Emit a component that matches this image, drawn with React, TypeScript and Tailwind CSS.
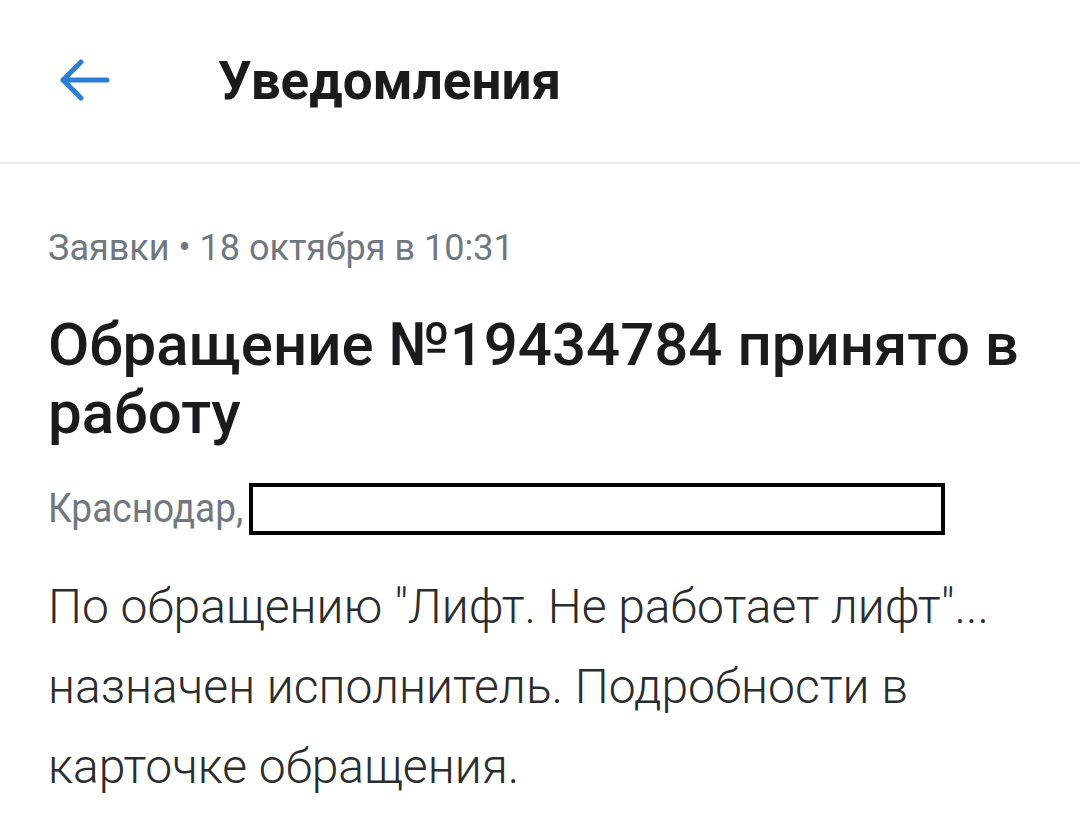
export default function App() {
  return (
    <div className="min-h-screen w-[1080px] bg-white font-['Roboto',sans-serif]">
      <header className="flex h-[164px] items-center border-b-2 border-[#ececec]">
        <div className="flex w-[218px] items-center pl-[58px]">
          <svg width="54" height="44" viewBox="0 0 54 44" fill="none">
            <path
              d="M49 21H5M23 3L5 21l18 18"
              stroke="#2a7fd4"
              strokeWidth="5"
              strokeLinecap="round"
              strokeLinejoin="round"
            />
          </svg>
        </div>
        <h1 className="text-[53px] font-bold leading-none text-[#1a1b1d]">Уведомления</h1>
      </header>

      <main className="px-[48px] pt-[60px]">
        <div className="text-[36px] leading-[48px] text-[#6f7881]">Заявки • 18 октября в 10:31</div>

        <h2 className="mt-[39px] text-[60px] font-medium leading-[68px] text-[#1a1b1d]">
          Обращение №19434784 принято в работу
        </h2>

        <div className="mt-[36px] flex items-center">
          <span className="inline-block scale-y-110 text-[37px] leading-[52px] text-[#6f7881]">Краснодар,</span>
          <div className="ml-[6px] h-[52px] w-[696px] border-[4px] border-black" />
        </div>

        <p className="mt-[32px] text-[48px] font-light leading-[80px] text-[#2b2c2e]">
          По обращению "Лифт. Не работает лифт"... назначен исполнитель. Подробности в карточке обращения.
        </p>
      </main>
    </div>
  );
}
